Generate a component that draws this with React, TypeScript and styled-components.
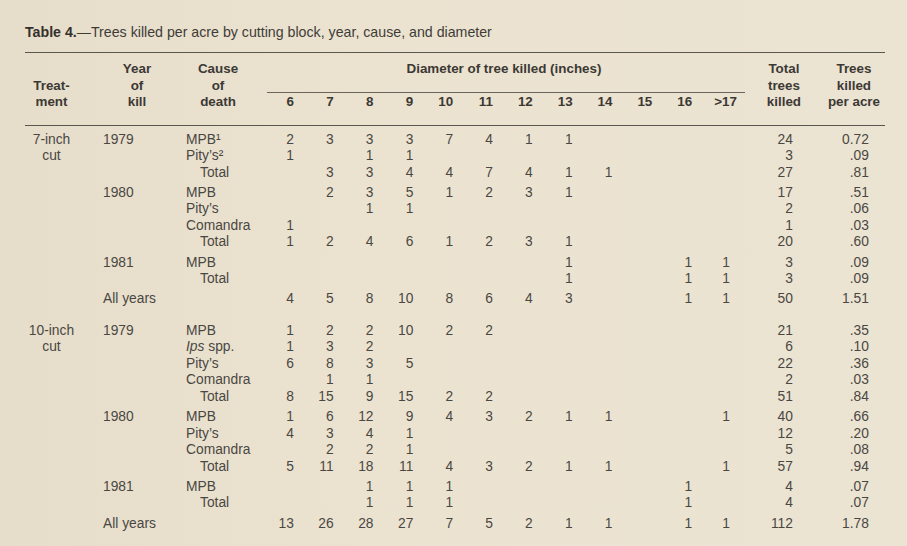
import React from "react";
import styled, { createGlobalStyle } from "styled-components";

const GlobalStyle = createGlobalStyle`
  html, body {
    margin: 0;
    padding: 0;
  }
  body {
    width: 907px;
    height: 546px;
    overflow: hidden;
    background: linear-gradient(90deg, #e6ddca 0%, #ebe3d0 40%, #ece4d2 100%);
    font-family: "Liberation Sans", Arial, Helvetica, sans-serif;
    color: #4a4743;
  }
`;

const COLUMNS = "53px 108px 81px repeat(12, 39.83px) 78px 62px";
const ROW_H = 16.5;

const Page = styled.div`
  padding: 24px 22px 0 25px;
`;

const Title = styled.div`
  font-size: 14.2px;
  line-height: 17px;
  color: #3f3c38;
  margin-bottom: 11px;

  b {
    font-weight: 700;
    color: #34312d;
  }
`;

const Rule = styled.div`
  height: 0;
  border-top: 1.4px solid #5a5650;
  width: 860px;
`;

const HeaderGrid = styled.div`
  display: grid;
  grid-template-columns: ${COLUMNS};
  padding: 8px 0 14px;
  font-size: 13.4px;
  font-weight: 700;
  line-height: ${ROW_H}px;
  color: #3c3935;
`;

const HeadCell = styled.div<{ $offset?: number }>`
  display: flex;
  flex-direction: column;
  justify-content: flex-end;
  align-items: center;
  text-align: center;
  white-space: nowrap;
  padding-left: ${(p) => (p.$offset && p.$offset > 0 ? p.$offset : 0)}px;
  padding-right: ${(p) => (p.$offset && p.$offset < 0 ? -p.$offset : 0)}px;
`;

const DiameterHead = styled.div`
  grid-column: span 12;
  display: flex;
  flex-direction: column;
  justify-content: space-between;
`;

const DiameterTitle = styled.div`
  text-align: center;
  padding-right: 4px;
`;

const SubRule = styled.div`
  border-top: 1px solid #6a665f;
  margin: 13px 0 1px;
`;

const SizeRow = styled.div`
  display: grid;
  grid-template-columns: repeat(12, 39.83px);
`;

const SizeCell = styled.div<{ $pad?: number }>`
  text-align: right;
  white-space: nowrap;
  padding-right: ${(p) => p.$pad ?? 13}px;
`;

const Body = styled.div`
  padding-top: 6px;
  font-size: 13.8px;
  color: #4a4743;
`;

const Group = styled.div`
  & + & {
    margin-top: 15px;
  }
`;

const Row = styled.div<{ $gap?: boolean }>`
  display: grid;
  grid-template-columns: ${COLUMNS};
  height: ${ROW_H}px;
  line-height: ${ROW_H}px;
  margin-top: ${(p) => (p.$gap ? 3.8 : 0)}px;
`;

const TreatCell = styled.div`
  text-align: center;
  white-space: nowrap;
`;

const YearCell = styled.div`
  padding-left: 25px;
  white-space: nowrap;
`;

const CauseCell = styled.div<{ $total?: boolean }>`
  padding-left: ${(p) => (p.$total ? 14 : 0)}px;
  white-space: nowrap;

  i {
    font-style: italic;
  }
`;

const NumCell = styled.div<{ $pad: number }>`
  text-align: right;
  padding-right: ${(p) => p.$pad}px;
`;

interface RowData {
  treat?: string;
  year?: string;
  cause?: React.ReactNode;
  total?: boolean;
  gap?: boolean;
  d: string;
  sum: string;
  rate: string;
}

const sevenInch: RowData[] = [
  { treat: "7-inch", year: "1979", cause: "MPB¹", d: "2,3,3,3,7,4,1,1", sum: "24", rate: "0.72" },
  { treat: "cut", cause: "Pity’s²", d: "1,,1,1", sum: "3", rate: ".09" },
  { cause: "Total", total: true, d: ",3,3,4,4,7,4,1,1", sum: "27", rate: ".81" },
  { year: "1980", gap: true, cause: "MPB", d: ",2,3,5,1,2,3,1", sum: "17", rate: ".51" },
  { cause: "Pity’s", d: ",,1,1", sum: "2", rate: ".06" },
  { cause: "Comandra", d: "1", sum: "1", rate: ".03" },
  { cause: "Total", total: true, d: "1,2,4,6,1,2,3,1", sum: "20", rate: ".60" },
  { year: "1981", gap: true, cause: "MPB", d: ",,,,,,,1,,,1,1", sum: "3", rate: ".09" },
  { cause: "Total", total: true, d: ",,,,,,,1,,,1,1", sum: "3", rate: ".09" },
  { year: "All years", gap: true, d: "4,5,8,10,8,6,4,3,,,1,1", sum: "50", rate: "1.51" },
];

const tenInch: RowData[] = [
  { treat: "10-inch", year: "1979", cause: "MPB", d: "1,2,2,10,2,2", sum: "21", rate: ".35" },
  {
    treat: "cut",
    cause: (
      <>
        <i>Ips</i> spp.
      </>
    ),
    d: "1,3,2",
    sum: "6",
    rate: ".10",
  },
  { cause: "Pity’s", d: "6,8,3,5", sum: "22", rate: ".36" },
  { cause: "Comandra", d: ",1,1", sum: "2", rate: ".03" },
  { cause: "Total", total: true, d: "8,15,9,15,2,2", sum: "51", rate: ".84" },
  { year: "1980", gap: true, cause: "MPB", d: "1,6,12,9,4,3,2,1,1,,,1", sum: "40", rate: ".66" },
  { cause: "Pity’s", d: "4,3,4,1", sum: "12", rate: ".20" },
  { cause: "Comandra", d: ",2,2,1", sum: "5", rate: ".08" },
  { cause: "Total", total: true, d: "5,11,18,11,4,3,2,1,1,,,1", sum: "57", rate: ".94" },
  { year: "1981", gap: true, cause: "MPB", d: ",,1,1,1,,,,,,1", sum: "4", rate: ".07" },
  { cause: "Total", total: true, d: ",,1,1,1,,,,,,1", sum: "4", rate: ".07" },
  { year: "All years", gap: true, d: "13,26,28,27,7,5,2,1,1,,1,1", sum: "112", rate: "1.78" },
];

const sizes = ["6", "7", "8", "9", "10", "11", "12", "13", "14", "15", "16", ">17"];

const cells = (d: string) => {
  const parts = d.split(",");
  return Array.from({ length: 12 }, (_, i) => parts[i] ?? "");
};

const TableRow: React.FC<{ row: RowData }> = ({ row }) => (
  <Row $gap={row.gap}>
    <TreatCell>{row.treat}</TreatCell>
    <YearCell>{row.year}</YearCell>
    <CauseCell $total={row.total}>{row.cause}</CauseCell>
    {cells(row.d).map((v, i) => (
      <NumCell key={i} $pad={i === 11 ? 15 : 13}>
        {v}
      </NumCell>
    ))}
    <NumCell $pad={30}>{row.sum}</NumCell>
    <NumCell $pad={16}>{row.rate}</NumCell>
  </Row>
);

export default function App() {
  return (
    <>
      <GlobalStyle />
      <Page>
        <Title>
          <b>Table 4.</b>—Trees killed per acre by cutting block, year, cause, and diameter
        </Title>
        <Rule />
        <HeaderGrid>
          <HeadCell>
            <span>Treat-</span>
            <span>ment</span>
          </HeadCell>
          <HeadCell $offset={10}>
            <span>Year</span>
            <span>of</span>
            <span>kill</span>
          </HeadCell>
          <HeadCell $offset={-17}>
            <span>Cause</span>
            <span>of</span>
            <span>death</span>
          </HeadCell>
          <DiameterHead>
            <DiameterTitle>Diameter of tree killed (inches)</DiameterTitle>
            <div>
              <SubRule />
              <SizeRow>
                {sizes.map((s, i) => (
                  <SizeCell key={s} $pad={i === 11 ? 8 : 13}>
                    {s}
                  </SizeCell>
                ))}
              </SizeRow>
            </div>
          </DiameterHead>
          <HeadCell>
            <span>Total</span>
            <span>trees</span>
            <span>killed</span>
          </HeadCell>
          <HeadCell>
            <span>Trees</span>
            <span>killed</span>
            <span>per acre</span>
          </HeadCell>
        </HeaderGrid>
        <Rule />
        <Body>
          <Group>
            {sevenInch.map((r, i) => (
              <TableRow key={i} row={r} />
            ))}
          </Group>
          <Group>
            {tenInch.map((r, i) => (
              <TableRow key={i} row={r} />
            ))}
          </Group>
        </Body>
      </Page>
    </>
  );
}
